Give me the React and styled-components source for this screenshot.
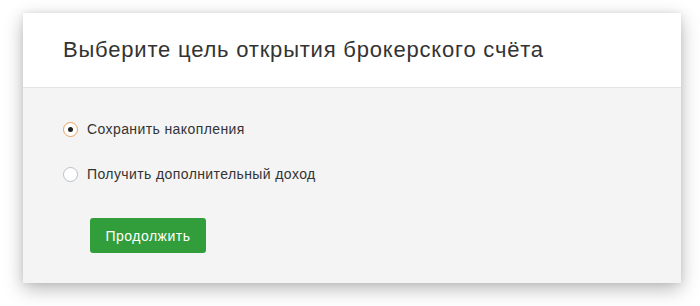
import React, { useState } from "react";
import styled, { createGlobalStyle } from "styled-components";

const Global = createGlobalStyle`
  html, body { margin: 0; padding: 0; background: #ffffff; }
  body { font-family: "Liberation Sans", Arial, sans-serif; }
  * { box-sizing: border-box; }
`;

const Page = styled.div`
  padding: 13px 19px 23px 23px;
`;

const Card = styled.div`
  background: #f4f4f4;
  box-shadow: 0 6px 18px rgba(0, 0, 0, 0.28), 0 0 6px rgba(0, 0, 0, 0.08);
  height: 270px;
  display: flex;
  flex-direction: column;
`;

const Header = styled.div`
  background: #ffffff;
  height: 75px;
  border-bottom: 1px solid #e4e4e4;
  display: flex;
  align-items: center;
  padding: 0 0 0 40px;
`;

const Title = styled.h1`
  margin: 0;
  font-weight: normal;
  font-size: 22px;
  color: #333333;
  letter-spacing: 0.8px;
`;

const Body = styled.div`
  padding: 31px 0 0 40px;
  display: flex;
  flex-direction: column;
`;

const Option = styled.label`
  display: flex;
  align-items: center;
  gap: 9px;
  height: 20px;
  margin-bottom: 25px;
  font-size: 14px;
  letter-spacing: 0.4px;
  color: #333333;
  cursor: pointer;
`;

const Radio = styled.span`
  width: 15px;
  height: 15px;
  border-radius: 50%;
  background: #ffffff;
  border: 1px solid ${(p) => (p.$checked ? "#e8a15b" : "#b9bec4")};
  display: flex;
  align-items: center;
  justify-content: center;
  flex: none;
  &::after {
    content: "";
    width: 5px;
    height: 5px;
    border-radius: 50%;
    background: #222;
    display: ${(p) => (p.$checked ? "block" : "none")};
  }
`;

const Button = styled.button`
  margin: 9px 0 0 27px;
  align-self: flex-start;
  width: 116px;
  height: 35px;
  background: #319e3b;
  color: #ffffff;
  border: none;
  border-radius: 3px;
  font-family: "Liberation Sans", Arial, sans-serif;
  font-size: 14px;
  letter-spacing: 0.5px;
  cursor: pointer;
`;

const options = ["Сохранить накопления", "Получить дополнительный доход"];

export default function App() {
  const [sel, setSel] = useState(0);
  return (
    <>
      <Global />
      <Page>
        <Card>
          <Header>
            <Title>Выберите цель открытия брокерского счёта</Title>
          </Header>
          <Body>
            {options.map((o, i) => (
              <Option key={o} onClick={() => setSel(i)}>
                <Radio $checked={sel === i} />
                {o}
              </Option>
            ))}
            <Button>Продолжить</Button>
          </Body>
        </Card>
      </Page>
    </>
  );
}
